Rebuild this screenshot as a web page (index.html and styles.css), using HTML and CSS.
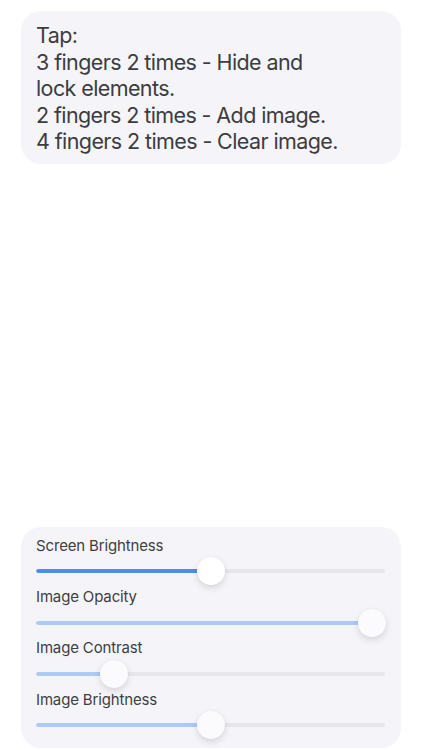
FILE: index.html
```html
<!DOCTYPE html>
<html>
<head>
<meta charset="utf-8">
<link rel="stylesheet" href="styles.css">
</head>
<body>
<div class="screen">
  <div class="help-card">
    <p class="help-text">Tap:<br>3 fingers 2 times - Hide and<br>lock elements.<br>2 fingers 2 times - Add image.<br>4 fingers 2 times - Clear image.</p>
  </div>
  <div class="spacer"></div>
  <div class="controls-card">
    <div class="control">
      <div class="label">Screen Brightness</div>
      <div class="slider active">
        <div class="track"><div class="fill" style="width: 175px"></div></div>
        <div class="thumb" style="left: 161px"></div>
      </div>
    </div>
    <div class="control">
      <div class="label">Image Opacity</div>
      <div class="slider muted">
        <div class="track"><div class="fill" style="width: 336px"></div></div>
        <div class="thumb" style="left: 322px"></div>
      </div>
    </div>
    <div class="control">
      <div class="label">Image Contrast</div>
      <div class="slider muted">
        <div class="track"><div class="fill" style="width: 78px"></div></div>
        <div class="thumb" style="left: 64px"></div>
      </div>
    </div>
    <div class="control">
      <div class="label">Image Brightness</div>
      <div class="slider muted">
        <div class="track"><div class="fill" style="width: 175px"></div></div>
        <div class="thumb" style="left: 161px"></div>
      </div>
    </div>
  </div>
</div>
</body>
</html>
```
FILE: styles.css
```css
* { box-sizing: border-box; }
html, body {
  margin: 0;
  padding: 0;
  background: #ffffff;
}
body {
  font-family: Inter, "Liberation Sans", sans-serif;
  color: #3a3a3c;
}
.screen {
  width: 422px;
  height: 750px;
  display: flex;
  flex-direction: column;
  padding: 11px 21px 2px 21px;
}
.help-card {
  background: #f5f5f9;
  border-radius: 20px;
  padding: 11px 15px 9px 15px;
}
.help-text {
  margin: 0;
  font-size: 21.5px;
  line-height: 26.5px;
  letter-spacing: -0.6px;
  color: #3c3c3f;
}
.spacer { flex: 1; }
.controls-card {
  background: #f5f5f9;
  border-radius: 20px;
  padding: 9px 15px 7px 15px;
  display: flex;
  flex-direction: column;
}
.control {
  display: flex;
  flex-direction: column;
}
.label {
  height: 20px;
  line-height: 20px;
  font-size: 15px;
  letter-spacing: -0.15px;
  color: #3e3e42;
}
.slider {
  position: relative;
  height: 31.33px;
  display: flex;
  align-items: center;
}
.track {
  width: 349px;
  height: 4px;
  border-radius: 2px;
  background: #e6e6eb;
  overflow: hidden;
}
.fill {
  height: 100%;
  border-radius: 2px;
}
.active .fill { background: #4a90e6; }
.muted .fill { background: #a9cbf4; }
.thumb {
  position: absolute;
  top: calc(50% - 14px);
  width: 28px;
  height: 28px;
  border-radius: 50%;
  background: #ffffff;
  box-shadow: 0 3px 7px rgba(0, 0, 0, 0.13), 0 0 1px rgba(0, 0, 0, 0.08);
}
.muted .thumb { background: #fbfbfd; }
```
